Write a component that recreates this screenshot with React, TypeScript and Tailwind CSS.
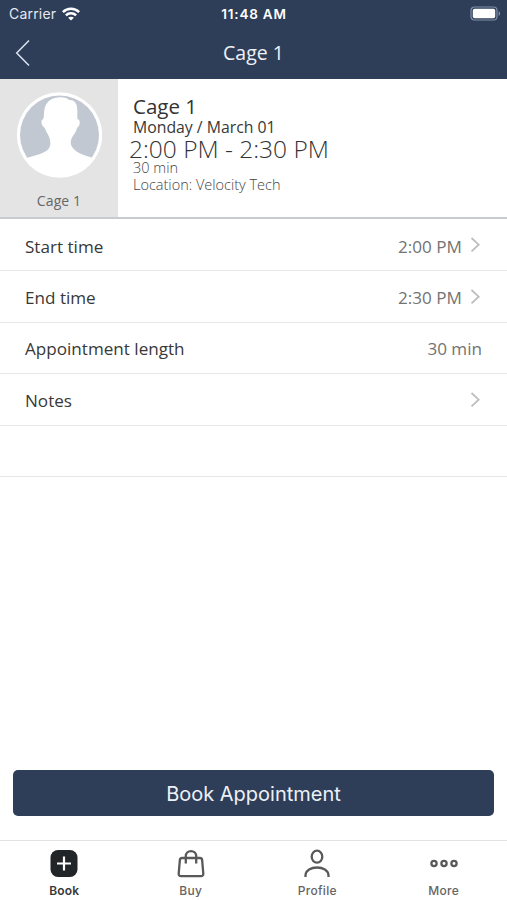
import type { ReactNode } from "react";

const rows = [
  { label: "Start time", value: "2:00 PM", chevron: true },
  { label: "End time", value: "2:30 PM", chevron: true },
  { label: "Appointment length", value: "30 min", chevron: false },
  { label: "Notes", value: "", chevron: true },
  { label: "", value: "", chevron: false },
];

function WifiIcon() {
  return (
    <svg width="18" height="14" viewBox="0 0 18 14" fill="none" stroke="white" strokeWidth="2.6">
      <path d="M0.9 5.1C5.4 0.6 12.6 0.6 17.1 5.1" />
      <path d="M3.9 8.4C6.7 5.6 11.3 5.6 14.1 8.4" />
      <path d="M9 13.6L6.1 10.8C7.7 9.3 10.3 9.3 11.9 10.8Z" fill="white" stroke="none" />
    </svg>
  );
}

function BatteryIcon() {
  return (
    <svg width="31" height="15" viewBox="0 0 31 15" fill="none">
      <rect x="1" y="1" width="26" height="13" rx="3.5" stroke="#8090a8" strokeWidth="1.2" />
      <rect x="2.8" y="2.8" width="22.4" height="9.4" rx="1.8" fill="white" />
      <path d="M28.6 5.2C30.6 6 30.6 9 28.6 9.8Z" fill="#8090a8" />
    </svg>
  );
}

function Chevron() {
  return (
    <svg className="-mt-[2px] mr-px ml-2" width="11" height="16" viewBox="0 0 11 16" fill="none" stroke="#bebebe" strokeWidth="1.8">
      <path d="M1.5 1L8.7 7.7L1.5 14.4" />
    </svg>
  );
}

function Avatar() {
  return (
    <svg width="86" height="86" viewBox="0 0 86 86">
      <circle cx="43.5" cy="43" r="42.7" fill="white" />
      <circle cx="43.5" cy="43" r="39.5" fill="#c1c8d1" />
      <path
        fill="white"
        d="M10 66C21 63 32 61 34 54C35 49 33.5 45 30.5 40C29 37 29 35.500 27.500 35C25.500 33 24.500 28.500 26.500 27.500C28.500 26.500 27.500 22 28.500 17C30 10 35 6 42 5.500C48 5 51 6 53 8C57.500 7.500 61 11 61 15.500C61.800 19 61 23 61.500 27C64.500 27.500 64 32.500 62.500 34.500C60.500 35.500 61 38 59 41C55.500 46 53.500 49 55.500 54C58.500 60 67 63 77 66A40 40 0 0 1 10 66Z"
      />
    </svg>
  );
}

function Tab({ label, active, children }: { label: string; active?: boolean; children: ReactNode }) {
  return (
    <button className="flex flex-1 flex-col items-center pt-[8px]">
      <svg width="30" height="30" viewBox="0 0 30 30" fill="none" stroke="#595959" strokeWidth="2.3">
        {children}
      </svg>
      <span
        className={`mt-[4px] font-['Inter'] text-[12px] leading-[16px] ${
          active ? "font-semibold tracking-[0.1px] text-[#383838]" : "font-medium tracking-[0.3px] text-[#646464]"
        }`}
      >
        {label}
      </span>
    </button>
  );
}

export default function App() {
  return (
    <div className="flex h-[900px] w-[507px] flex-col overflow-hidden bg-white font-['Open_Sans',sans-serif]">
      <header className="h-[79px] shrink-0 bg-[#2e3e58] text-white">
        <div className="grid h-[27px] grid-cols-3 items-center pr-[6px] pl-[9px] font-['Inter'] text-[14px] leading-[20px]">
          <div className="flex items-center gap-[6px] text-[#e4e9f0]">
            <span className="tracking-[0.2px]">Carrier</span>
            <WifiIcon />
          </div>
          <div className="-ml-[2px] text-center text-[13.5px] font-semibold tracking-[0.8px]">11:48 AM</div>
          <div className="flex justify-end">
            <BatteryIcon />
          </div>
        </div>
        <div className="grid h-[52px] grid-cols-3 items-center px-[15px]">
          <svg width="16" height="28" viewBox="0 0 16 28" fill="none" stroke="#dbe3ee" strokeWidth="1.5">
            <path d="M14 1.5L1.7 14L14 26.5" />
          </svg>
          <h1 className="text-center text-[19.5px] leading-[26px] text-[#edf1f7]">Cage 1</h1>
        </div>
      </header>

      <section className="flex h-[140px] shrink-0 border-b-[2px] border-[#c8cbcf]">
        <div className="flex w-[118px] flex-col items-center bg-[#e4e4e4] pt-[13px]">
          <Avatar />
          <span className="mt-[13px] text-[14px] leading-[20px] tracking-[0.1px] text-[#666]">Cage 1</span>
        </div>
        <div className="pt-[14px] pl-[15px]">
          <h2 className="text-[20.5px] leading-[26px] text-[#333]">Cage 1</h2>
          <p className="text-[15.8px] leading-[16px] text-[#383838]">Monday / March 01</p>
          <p className="-ml-[4px] text-[24.5px] leading-[28px] font-light text-[#333]">2:00 PM - 2:30 PM</p>
          <p className="text-[14.5px] leading-[10px] font-light text-[#444]">30 min</p>
          <p className="mt-[3px] text-[14.5px] leading-[18px] font-light text-[#444]">Location: Velocity Tech</p>
        </div>
      </section>

      <ul className="pt-px">
        {rows.map((row, i) => (
          <li
            key={i}
            className="flex h-[51.4px] items-center border-b border-[#e7e7e7] pt-[2.4px] pr-[25px] pl-[25px] text-[17.1px] text-[#383838]"
          >
            <span className="flex-1">{row.label}</span>
            <span className="text-[#737373]">{row.value}</span>
            {row.chevron && <Chevron />}
          </li>
        ))}
      </ul>

      <div className="mt-auto px-[13px] pb-[24px]">
        <button className="h-[46px] w-full rounded-[5px] bg-[#2e3e58] pt-px font-['Inter'] text-[20px] text-[#edf1f7]">
          Book Appointment
        </button>
      </div>

      <nav className="flex h-[60px] shrink-0 border-t border-[#e2e2e2] pl-px">
        <Tab label="Book" active>
          <rect x="1.5" y="1" width="27" height="27" rx="7.5" fill="#222527" stroke="none" />
          <path d="M15 7.5V21.5M8 14.5H22" stroke="white" strokeWidth="2.2" />
        </Tab>
        <Tab label="Buy">
          <path d="M6 9Q4.200 9 3.900 10.800L2.700 24.500C2.600 26.300 3.500 27.200 5.200 27.200H24.800C26.500 27.200 27.400 26.300 27.300 24.500L26.100 10.800Q25.800 9 24 9Z" />
          <path d="M9.800 14.500V7.300C9.800 0.300 20.200 0.300 20.200 7.300V14.500" />
        </Tab>
        <Tab label="Profile">
          <ellipse cx="15" cy="7.700" rx="5.300" ry="6" />
          <path d="M3.500 28V26.500C3.500 15.800 26.500 15.800 26.500 26.500V28" />
        </Tab>
        <Tab label="More">
          <circle cx="5" cy="14.5" r="2.600" />
          <circle cx="15" cy="14.5" r="2.600" />
          <circle cx="25" cy="14.5" r="2.600" />
        </Tab>
      </nav>
    </div>
  );
}
